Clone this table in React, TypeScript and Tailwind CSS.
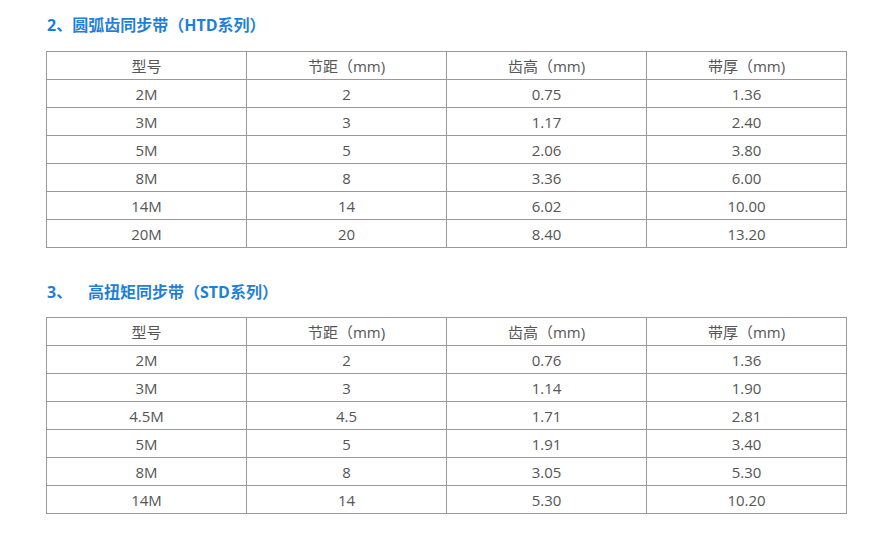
const htd = [
  ["2M", "2", "0.75", "1.36"],
  ["3M", "3", "1.17", "2.40"],
  ["5M", "5", "2.06", "3.80"],
  ["8M", "8", "3.36", "6.00"],
  ["14M", "14", "6.02", "10.00"],
  ["20M", "20", "8.40", "13.20"],
];

const std = [
  ["2M", "2", "0.76", "1.36"],
  ["3M", "3", "1.14", "1.90"],
  ["4.5M", "4.5", "1.71", "2.81"],
  ["5M", "5", "1.91", "3.40"],
  ["8M", "8", "3.05", "5.30"],
  ["14M", "14", "5.30", "10.20"],
];

const head = ["型号", "节距（mm)", "齿高（mm)", "带厚（mm)"];

const SpecTable = ({ rows }: { rows: string[][] }) => (
  <table className="w-[801px] border-collapse text-[15px] text-[#555]">
    <thead>
      <tr className="h-[28px]">
        {head.map((h) => (
          <td key={h} className="border border-[#999] text-center font-normal leading-[20px] p-0 w-[200px]">
            {h}
          </td>
        ))}
      </tr>
    </thead>
    <tbody>
      {rows.map((r) => (
        <tr key={r[0]} className="h-[28px]">
          {r.map((c, i) => (
            <td key={i} className="border border-[#999] text-center leading-[20px] p-0">
              {c}
            </td>
          ))}
        </tr>
      ))}
    </tbody>
  </table>
);

export default function App() {
  return (
    <div
      className="bg-white w-[880px] h-[535px] pl-[46px] pt-[13px]"
      style={{ fontFamily: '"Open Sans", "Noto Sans CJK SC", sans-serif' }}
    >
      <h2 className="text-[16px] leading-[24px] font-bold text-[#1f7fd8] pl-px mb-[14px]">
        2、圆弧齿同步带（HTD系列）
      </h2>
      <SpecTable rows={htd} />
      <h2 className="text-[16px] leading-[24px] font-bold text-[#1f7fd8] pl-px mt-[32px] mb-[13px] flex">
        <span className="w-[41px]">3、</span>
        <span>高扭矩同步带（STD系列）</span>
      </h2>
      <SpecTable rows={std} />
    </div>
  );
}
